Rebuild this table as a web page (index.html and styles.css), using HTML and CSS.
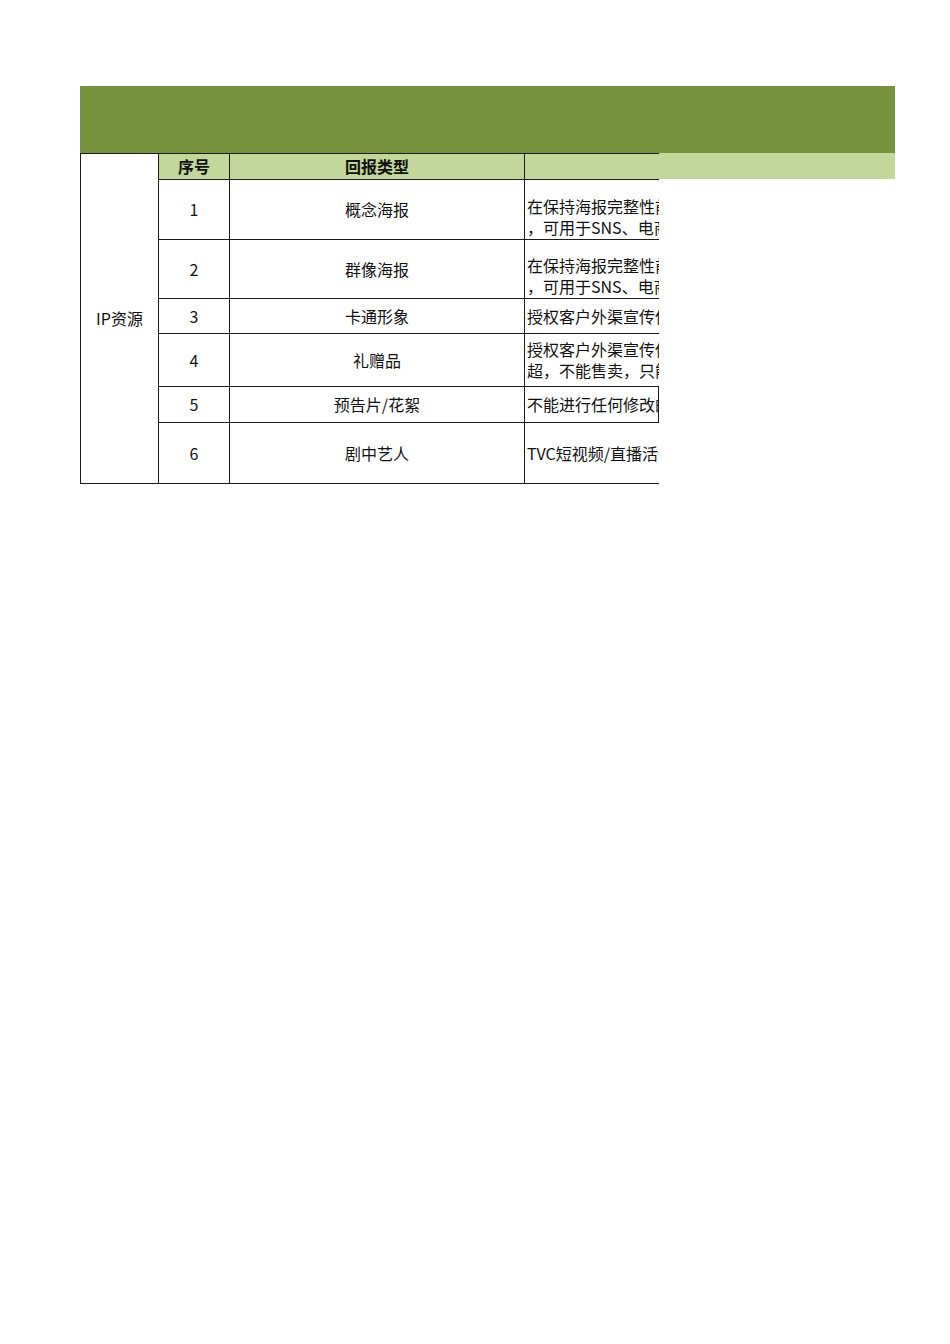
FILE: index.html
```html
<!DOCTYPE html>
<html lang="zh-CN">
<head>
<meta charset="utf-8">
<title>IP资源</title>
<link rel="stylesheet" href="styles.css">
</head>
<body>
<div class="sheet">
  <div class="band"></div>
  <div class="grid-row">
    <table class="tbl">
      <colgroup>
        <col class="c1"><col class="c2"><col class="c3"><col class="c4">
      </colgroup>
      <tr class="r-head">
        <td class="cat" rowspan="7">IP资源</td>
        <th class="h">序号</th>
        <th class="h">回报类型</th>
        <th class="h hl"></th>
      </tr>
      <tr class="r1">
        <td class="num">1</td>
        <td class="type">概念海报</td>
        <td class="desc shift"><div class="clip">在保持海报完整性前提下<br>，可用于SNS、电商平台</div></td>
      </tr>
      <tr class="r2">
        <td class="num">2</td>
        <td class="type">群像海报</td>
        <td class="desc shift"><div class="clip">在保持海报完整性前提下<br>，可用于SNS、电商平台</div></td>
      </tr>
      <tr class="r3">
        <td class="num">3</td>
        <td class="type">卡通形象</td>
        <td class="desc"><div class="clip">授权客户外渠宣传使用</div></td>
      </tr>
      <tr class="r4">
        <td class="num">4</td>
        <td class="type">礼赠品</td>
        <td class="desc"><div class="clip">授权客户外渠宣传使用<br>超，不能售卖，只能赠送</div></td>
      </tr>
      <tr class="r5">
        <td class="num">5</td>
        <td class="type">预告片/花絮</td>
        <td class="desc boxed"><div class="clip">不能进行任何修改的使用</div></td>
      </tr>
      <tr class="r6">
        <td class="num">6</td>
        <td class="type">剧中艺人</td>
        <td class="desc"><div class="clip">TVC短视频/直播活动</div></td>
      </tr>
    </table>
    <div class="filler"></div>
  </div>
</div>
</body>
</html>
```

FILE: styles.css
```css
html, body {
  margin: 0;
  padding: 0;
  background: #ffffff;
}

body {
  font-family: "Noto Sans CJK SC", "Noto Sans", sans-serif;
  font-size: 16px;
  color: #111111;
}

.sheet {
  padding-top: 86px;
  padding-left: 80px;
}

.band {
  width: 815px;
  height: 67px;
  background: #77923d;
}

.grid-row {
  display: flex;
  align-items: flex-start;
}

.filler {
  width: 236px;
  height: 26px;
  background: #c4d79b;
}

.tbl {
  border-collapse: collapse;
  table-layout: fixed;
  width: 578px;
}

.c1 { width: 78px; }
.c2 { width: 71px; }
.c3 { width: 295px; }
.c4 { width: 134px; }

.tbl td, .tbl th {
  padding: 0;
  border: 1px solid #1c1c1c;
  vertical-align: middle;
  line-height: 21px;
}

.tbl th.h {
  background: #c4d79b;
  font-weight: 700;
  text-align: center;
  font-size: 16px;
}

.tbl th.hl {
  border-right: none;
}

.r-head { height: 26px; }
.r1 { height: 60px; }
.r2 { height: 59px; }
.r3 { height: 35px; }
.r4 { height: 53px; }
.r5 { height: 36px; }
.r6 { height: 61px; }

.cat {
  text-align: center;
  background: #ffffff;
}

.num, .type {
  text-align: center;
}

.desc {
  border-right: none !important;
  text-align: left;
}

.desc.boxed {
  border-right: 1px solid #1c1c1c !important;
}

.desc.shift {
  padding-top: 14px !important;
}

.clip {
  width: 132px;
  overflow: hidden;
  white-space: nowrap;
  padding-left: 2px;
}
```
